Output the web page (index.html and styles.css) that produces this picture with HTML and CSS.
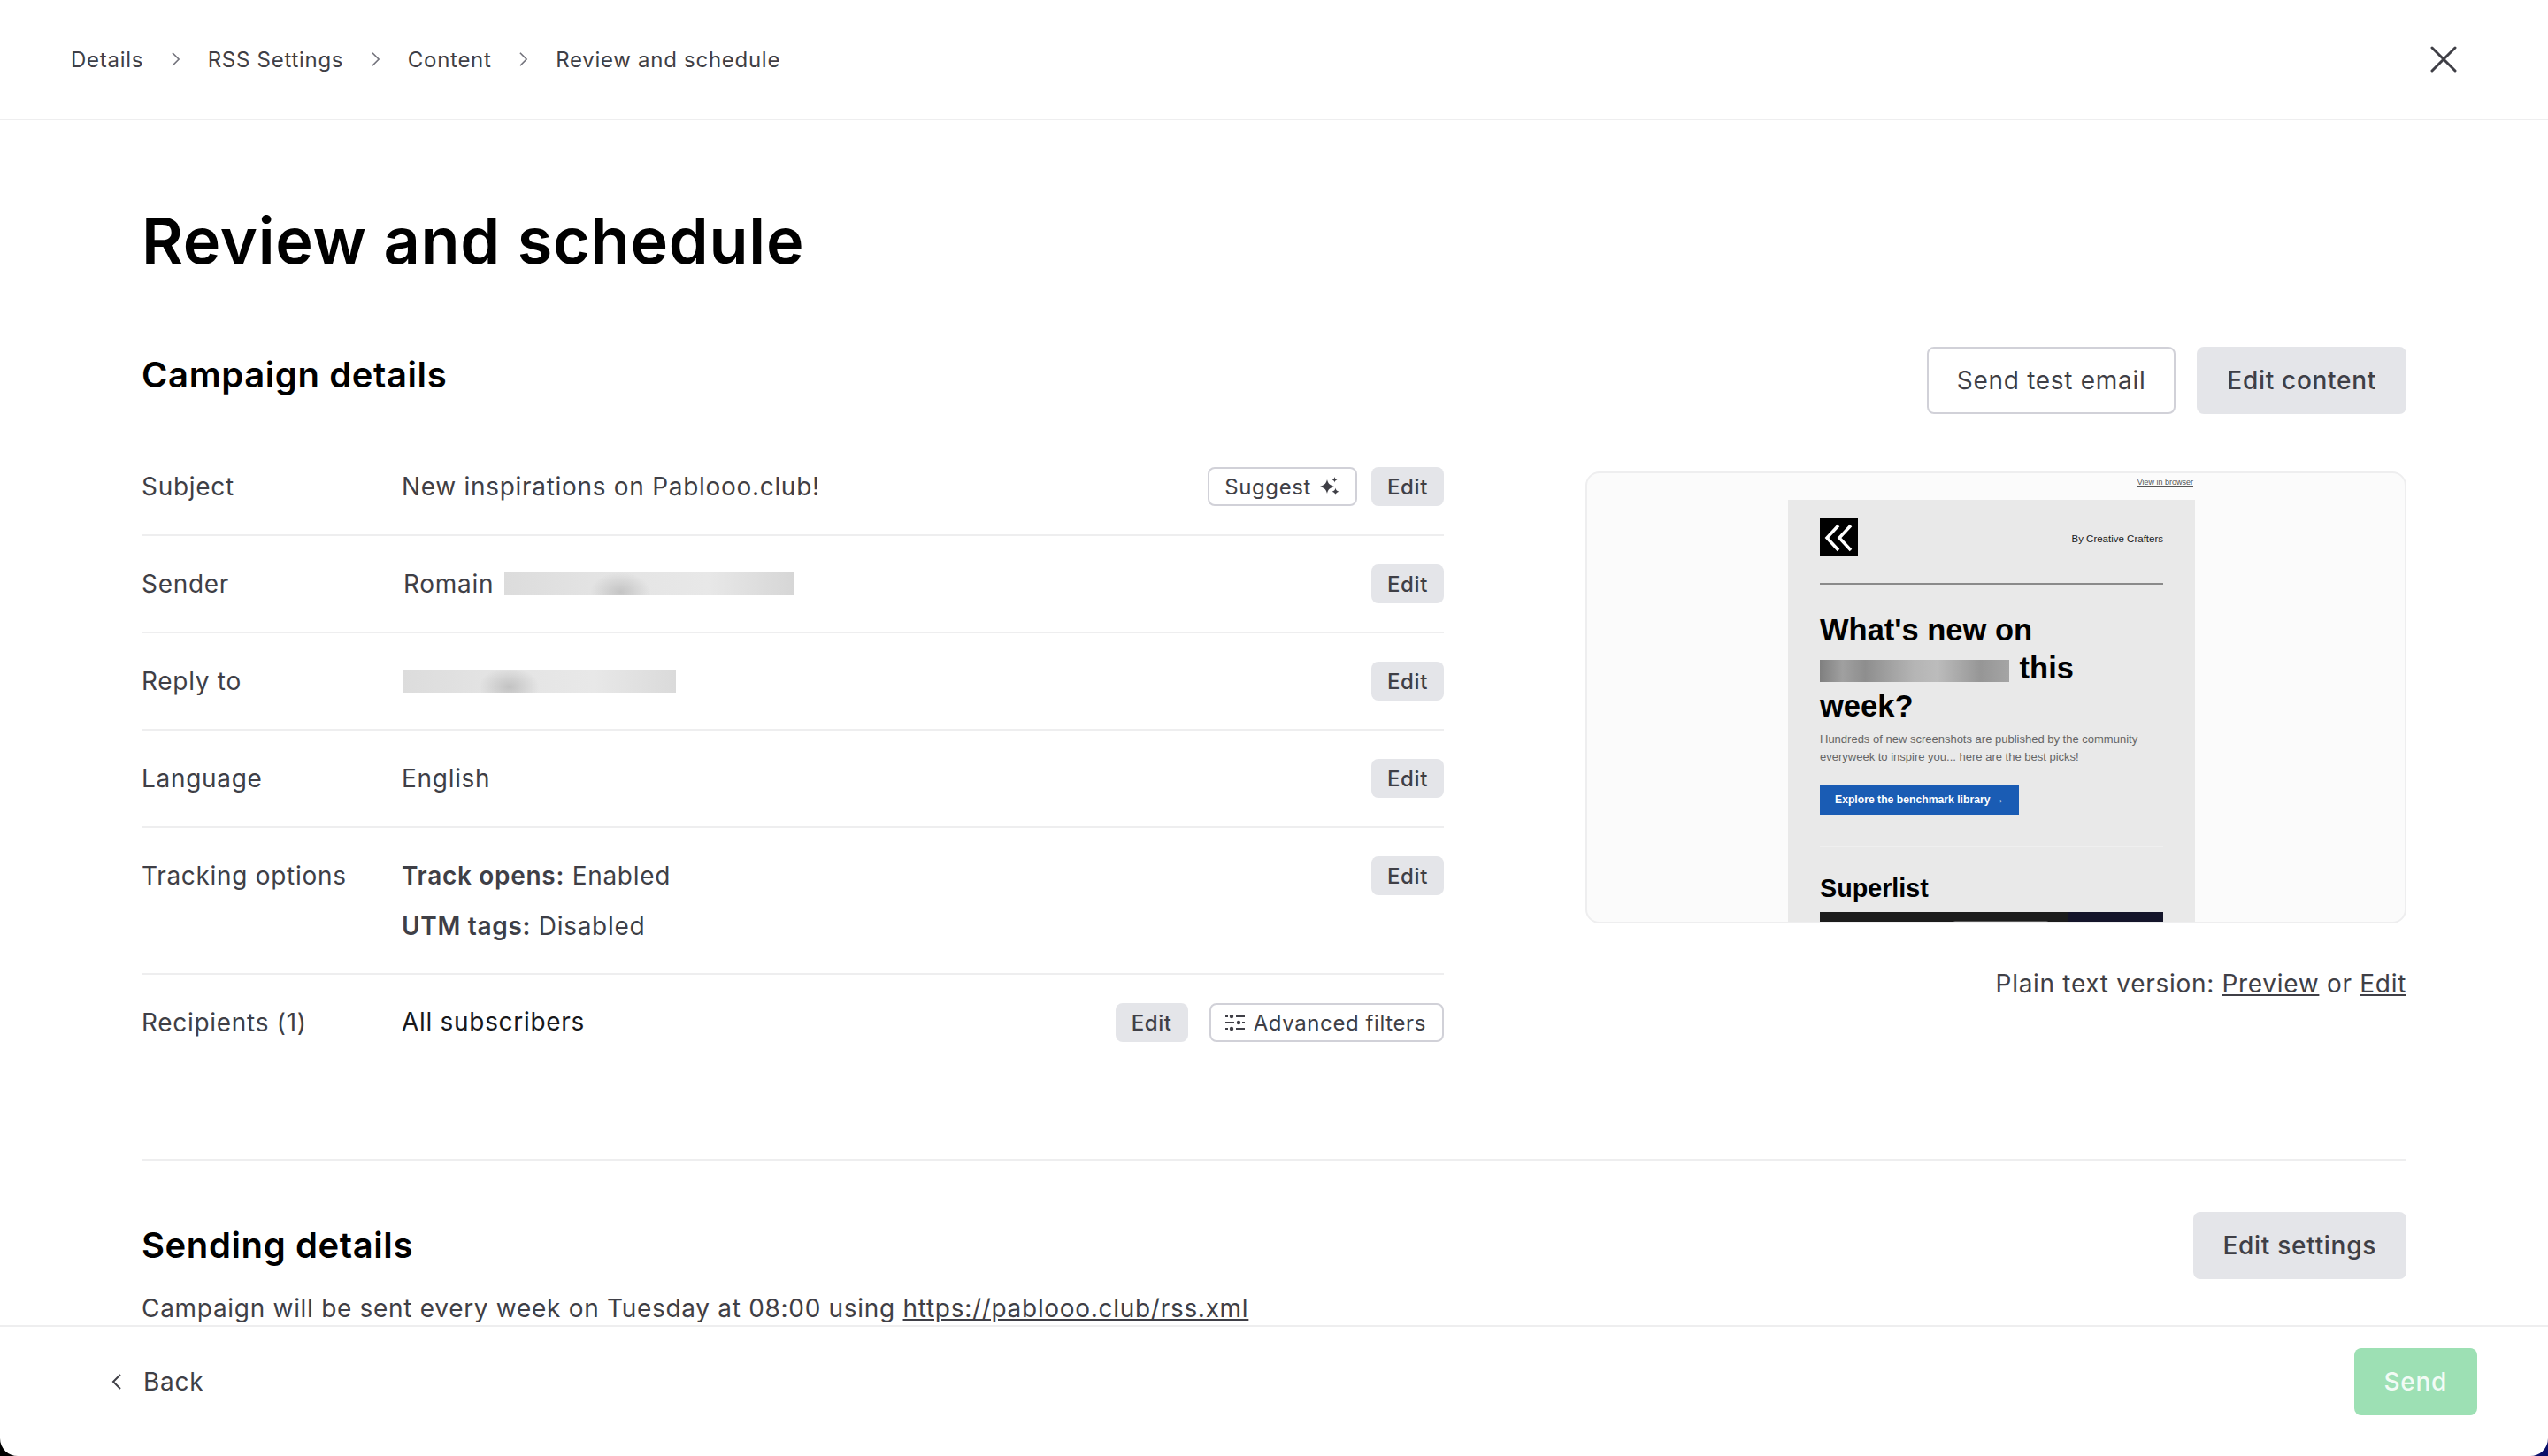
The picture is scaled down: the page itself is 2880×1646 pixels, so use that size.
FILE: index.html
```html
<!DOCTYPE html>
<html lang="en">
<head>
<meta charset="utf-8">
<title>Review and schedule</title>
<link rel="stylesheet" href="styles.css">
</head>
<body>
<div class="modal">
  <header class="topbar">
    <nav class="crumbs">
      <span>Details</span>
      <svg class="crumb-sep" viewBox="0 0 12 20"><path d="M2 2l8 8-8 8"/></svg>
      <span>RSS Settings</span>
      <svg class="crumb-sep" viewBox="0 0 12 20"><path d="M2 2l8 8-8 8"/></svg>
      <span>Content</span>
      <svg class="crumb-sep" viewBox="0 0 12 20"><path d="M2 2l8 8-8 8"/></svg>
      <span>Review and schedule</span>
    </nav>
    <svg class="close" viewBox="0 0 30 30"><path d="M2 2l26 26M28 2L2 28"/></svg>
  </header>

  <main class="content">
    <h1 class="title">Review and schedule</h1>
    <section class="campaign">
      <div class="details">
        <h2 class="section-title">Campaign details</h2>
        <div class="rows">
          <div class="row">
            <div class="label">Subject</div>
            <div class="value">New inspirations on Pablooo.club!</div>
            <div class="actions">
              <button class="btn-sm outline">Suggest
                <svg class="sparkle" viewBox="0 0 22 22"><path d="M8 3C9 7.500 10.500 9 16 11 10.500 13 9 14.500 8 19 7 14.500 5.500 13 0 11 5.500 9 7 7.500 8 3zM16.500 0c.4 2 1 2.700 3 3.300-2 .6-2.600 1.300-3 3.300-.4-2-1-2.700-3-3.300 2-.6 2.600-1.300 3-3.300zM17.500 12.500c.4 2.400 1.200 3.300 3.800 4.200-2.600.9-3.400 1.800-3.800 4.300-.4-2.500-1.200-3.400-3.800-4.300 2.600-.9 3.400-1.800 3.800-4.200z"/></svg>
              </button>
              <button class="btn-sm">Edit</button>
            </div>
          </div>
          <div class="row">
            <div class="label">Sender</div>
            <div class="value sender">Romain <span class="blur blur-sender"></span></div>
            <div class="actions"><button class="btn-sm">Edit</button></div>
          </div>
          <div class="row">
            <div class="label">Reply to</div>
            <div class="value"><span class="blur blur-reply"></span></div>
            <div class="actions"><button class="btn-sm">Edit</button></div>
          </div>
          <div class="row">
            <div class="label">Language</div>
            <div class="value">English</div>
            <div class="actions"><button class="btn-sm">Edit</button></div>
          </div>
          <div class="row row-tall">
            <div class="label">Tracking options</div>
            <div class="value stack">
              <div><strong>Track opens:</strong> Enabled</div>
              <div><strong>UTM tags:</strong> Disabled</div>
            </div>
            <div class="actions"><button class="btn-sm">Edit</button></div>
          </div>
          <div class="row row-last">
            <div class="label">Recipients (1)</div>
            <div class="value dark">All subscribers</div>
            <div class="actions wide">
              <button class="btn-sm">Edit</button>
              <button class="btn-sm outline filters">
                <svg class="filter-icon" viewBox="0 0 22 18"><path d="M0 2h3M12 2h10M0 9h10M19 9h3M0 16h3M12 16h10"/><circle cx="7" cy="2" r="2.200"/><circle cx="15" cy="9" r="2.200"/><circle cx="7" cy="16" r="2.200"/></svg>
                Advanced filters
              </button>
            </div>
          </div>
        </div>
      </div>

      <aside class="preview-col">
        <div class="preview-actions">
          <button class="btn outline">Send test email</button>
          <button class="btn">Edit content</button>
        </div>
        <div class="preview">
          <div class="email-wrap">
            <a class="view-browser">View in browser</a>
            <div class="email">
              <div class="email-head">
                <svg class="logo" viewBox="0 0 43 43"><rect width="43" height="43"/><path d="M21 8L8 22l13 14M35 8L22 22l13 14"/></svg>
                <span class="by">By Creative Crafters</span>
              </div>
              <h3 class="email-title">What's new on <span class="blur-title"></span> this week?</h3>
              <p class="email-text">Hundreds of new screenshots are published by the community everyweek to inspire you... here are the best picks!</p>
              <a class="email-cta">Explore the benchmark library →</a>
              <hr class="email-rule">
              <h4 class="email-sub">Superlist</h4>
              <div class="email-img"><span class="img-chip"></span><span class="img-side"></span></div>
            </div>
          </div>
        </div>
        <p class="plain">Plain text version: <a>Preview</a> or <a>Edit</a></p>
      </aside>
    </section>

    <section class="sending">
      <div class="sending-head">
        <h2 class="section-title">Sending details</h2>
        <button class="btn">Edit settings</button>
      </div>
      <p class="sending-text">Campaign will be sent every week on Tuesday at 08:00 using <a>https://pablooo.club/rss.xml</a></p>
    </section>
  </main>

  <footer class="footer">
    <div class="back">
      <svg class="back-icon" viewBox="0 0 12 20"><path d="M10 2l-8 8 8 8"/></svg>
      <span>Back</span>
    </div>
    <button class="btn send">Send</button>
  </footer>
</div>
</body>
</html>
```

FILE: styles.css
```css
* { box-sizing: border-box; }
html, body { margin: 0; height: 100%; }
body {
  background: linear-gradient(90deg, #000 0%, #0a0f6a 100%);
  font-family: Inter, "Liberation Sans", sans-serif;
  color: #3f3f46;
  overflow: hidden;
}
button { font-family: inherit; cursor: pointer; }
h1, h2, h3, h4, p { margin: 0; }

.modal {
  height: 1646px;
  background: #fff;
  border-radius: 0 0 20px 20px;
  display: flex;
  flex-direction: column;
  overflow: hidden;
}

.topbar {
  flex: 0 0 136px;
  border-bottom: 2px solid #eeeeef;
  display: flex;
  align-items: center;
  justify-content: space-between;
  padding: 0 103px 0 80px;
}
.crumbs {
  display: flex;
  align-items: center;
  gap: 30.800px;
  font-size: 24px;
  letter-spacing: 0.72px;
  color: #3f3f46;
}
.crumb-sep {
  width: 11px;
  height: 18px;
  fill: none;
  stroke: #71717a;
  stroke-width: 1.800;
}
.close {
  width: 30px;
  height: 30px;
  fill: none;
  stroke: #3f3f46;
  stroke-width: 3;
  stroke-linecap: round;
}

.content {
  flex: 1;
  min-height: 0;
  overflow: hidden;
  padding: 92px 160px 0;
}
.title {
  font-size: 72px;
  line-height: 88px;
  font-weight: 600;
  letter-spacing: 0.72px;
  color: #000;
}
.section-title {
  font-size: 40px;
  line-height: 48px;
  font-weight: 600;
  letter-spacing: 0.6px;
  color: #000;
}

.campaign {
  display: flex;
  justify-content: space-between;
  margin-top: 76px;
}
.details { width: 1472px; padding-top: 8px; }
.rows { margin-top: 48px; }
.row {
  height: 110px;
  display: flex;
  align-items: center;
  border-bottom: 2px solid #eeeeef;
  font-size: 28px;
  letter-spacing: 0.7px;
}
.row-tall {
  height: 166px;
  align-items: flex-start;
  padding-top: 32px;
}
.row-last {
  height: 108px;
  border-bottom: 0;
}
.label { flex: 0 0 294px; }
.value { flex: 1; min-width: 0; display: flex; align-items: center; }
.value.stack { flex-direction: column; align-items: flex-start; gap: 15px; line-height: 42px; padding-top: 1px; }
.value.dark { color: #18181b; margin-top: -2px; }
.value strong { font-weight: 600; }
.row-tall .label { line-height: 42px; padding-top: 1px; }
.sender { padding-left: 2px; }
.actions { display: flex; gap: 16px; align-items: center; }
.actions.wide { gap: 24px; }

.blur { display: inline-block; height: 26px; }
.blur-sender {
  width: 328px;
  margin-left: 12px;
  background: radial-gradient(ellipse 34px 22px at 40% 85%, #c4c4c4, transparent), linear-gradient(90deg, #dcdcdc, #e3e3e3 30%, #e8e8e8 70%, #d6d6d6);
}
.blur-reply {
  width: 309px;
  margin-left: 1px;
  background: radial-gradient(ellipse 34px 22px at 39% 75%, #c2c2c2, transparent), linear-gradient(90deg, #dcdcdc, #e3e3e3 30%, #e8e8e8 70%, #dadada);
}

.btn-sm {
  height: 44px;
  padding: 0 18px;
  border: 0;
  border-radius: 8px;
  background: #e4e5e9;
  color: #3f3f46;
  font-size: 24px;
  font-weight: 500;
  letter-spacing: 0.6px;
  white-space: nowrap;
  display: inline-flex;
  align-items: center;
  gap: 10px;
}
.btn-sm.outline {
  background: #fff;
  border: 2px solid #d1d1d8;
  padding: 0 18px 0 16px;
  font-weight: 400;
}
.actions .btn-sm:not(.outline) { width: 82px; padding: 0; justify-content: center; }
.btn-sm.outline:not(.filters) { padding: 0 18px 0 17px; }
.sparkle { width: 22px; height: 22px; fill: #3f3f46; }
.filter-icon {
  width: 22px;
  height: 18px;
  fill: #3f3f46;
  stroke: #3f3f46;
  stroke-width: 2;
}
.filter-icon circle { stroke: none; }

.preview-col {
  width: 928px;
  display: flex;
  flex-direction: column;
  align-items: stretch;
}
.preview-actions {
  display: flex;
  justify-content: flex-end;
  gap: 24px;
}
.btn {
  height: 76px;
  padding: 0 34px;
  border: 0;
  border-radius: 8px;
  background: #e4e5e9;
  color: #3f3f46;
  font-size: 28px;
  font-weight: 500;
  letter-spacing: 0.7px;
  white-space: nowrap;
}
.btn.outline { background: #fff; border: 2px solid #d1d1d8; padding: 0 32px; font-weight: 400; }
.btn.send { background: #9de0b4; color: #f2fbf5; }

.preview {
  margin-top: 65px;
  height: 511px;
  border: 2px solid #eeeeef;
  border-radius: 16px;
  background: #fbfbfb;
  overflow: hidden;
}
.email-wrap {
  width: 460px;
  margin-left: 227px;
  display: flex;
  flex-direction: column;
  font-family: "Liberation Sans", Arial, sans-serif;
}
.view-browser {
  align-self: flex-end;
  margin: 3px 2px 0 0;
  height: 27px;
  line-height: 15px;
  font-size: 9px;
  color: #555;
  text-decoration: underline;
}
.email {
  background: #e9e9e9;
  padding: 21px 36px 0;
  height: 600px;
}
.email-head {
  height: 75px;
  display: flex;
  justify-content: space-between;
  align-items: flex-start;
  border-bottom: 2px solid #8a8a8a;
}
.logo { width: 43px; height: 43px; }
.logo path { fill: none; stroke: #fff; stroke-width: 3.500; }
.by { font-size: 11.500px; color: #222; line-height: 46px; }
.email-title {
  margin-top: 30px;
  font-size: 34.500px;
  line-height: 43px;
  font-weight: 700;
  color: #000;
}
.blur-title {
  display: inline-block;
  width: 214px;
  height: 25px;
  vertical-align: -4px;
  margin-right: 2px;
  background: linear-gradient(90deg, #7f7f7f, #a0a0a0 12%, #8e8e8e 24%, #b5b5b5 50%, #bcbcbc 62%, #969696 85%, #a5a5a5);
}
.email-text {
  margin-top: 6px;
  font-size: 13px;
  line-height: 20px;
  color: #666;
}
.email-cta {
  display: block;
  width: 225px;
  height: 33px;
  margin-top: 22px;
  padding-left: 17px;
  background: #1a5cb4;
  color: #fff;
  font-size: 12.200px;
  font-weight: 700;
  line-height: 32px;
}
.email-rule {
  margin: 35px 0 0;
  border: 0;
  border-top: 2px solid #efefef;
}
.email-sub {
  margin-top: 28px;
  font-size: 28.700px;
  line-height: 36px;
  font-weight: 700;
  color: #000;
}
.email-img {
  margin-top: 9px;
  height: 200px;
  background: #1c1c1c;
  position: relative;
}
.img-chip {
  position: absolute;
  left: 150px;
  top: 10px;
  width: 109px;
  height: 40px;
  border: 1px solid #5a5a5a;
  border-radius: 3px;
}
.img-side {
  position: absolute;
  right: 0;
  top: 0;
  bottom: 0;
  width: 108px;
  background: #14152a;
  border-left: 1px solid #444;
}

.plain {
  margin-top: 49px;
  text-align: right;
  font-size: 28px;
  letter-spacing: 0.7px;
  line-height: 38px;
}
.plain a, .sending-text a { text-decoration: underline; }

.sending {
  margin-top: 100px;
  border-top: 2px solid #eeeeef;
}
.sending-head {
  display: flex;
  justify-content: space-between;
  align-items: center;
  margin-top: 58px;
}
.sending-text {
  margin-top: 14px;
  font-size: 28px;
  letter-spacing: 0.7px;
  line-height: 38px;
}

.footer {
  flex: 0 0 148px;
  border-top: 2px solid #eeeeef;
  display: flex;
  align-items: center;
  justify-content: space-between;
  padding: 0 80px 22px 126px;
}
.back {
  display: flex;
  align-items: center;
  gap: 24px;
  font-size: 28px;
  letter-spacing: 0.7px;
}
.back-icon {
  width: 12px;
  height: 20px;
  fill: none;
  stroke: #3f3f46;
  stroke-width: 2;
}
```
